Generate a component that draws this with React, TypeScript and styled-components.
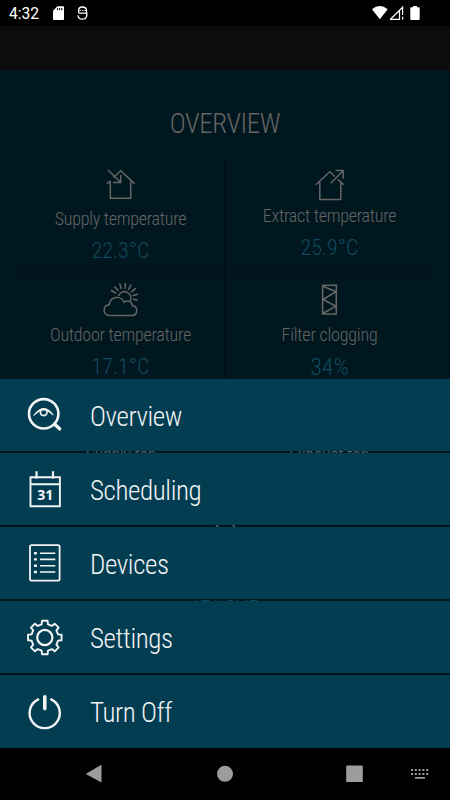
import React from 'react';
import styled, { createGlobalStyle } from 'styled-components';

const GlobalStyle = createGlobalStyle`
  * { box-sizing: border-box; }
  body { margin: 0; background: #000; }
`;

const Screen = styled.div`
  position: relative;
  width: 450px;
  height: 800px;
  overflow: hidden;
  display: flex;
  flex-direction: column;
  background: #000;
  font-family: Roboto, 'Liberation Sans', sans-serif;
`;

const StatusBar = styled.header`
  height: 26px;
  flex: none;
  display: flex;
  align-items: flex-start;
  justify-content: space-between;
  padding: 0 30px 0 9px;
  color: #fff;
`;

const StatusGroup = styled.div`
  display: flex;
  align-items: flex-start;
`;

const Clock = styled.span`
  width: 44px;
  font-size: 15.6px;
  line-height: 28px;
`;

const AppBar = styled.div`
  height: 44px;
  flex: none;
  background: #0c0c0c;
`;

const Page = styled.main`
  height: 678px;
  flex: none;
  overflow: hidden;
  background: #00171f;
  color: #656565;
`;

const Condensed = styled.span<{ $size: number; $tracking?: number }>`
  display: inline-block;
  white-space: nowrap;
  font-family: Roboto, 'Liberation Sans', sans-serif;
  font-weight: 300;
  font-stretch: 75%;
  font-size: ${(p) => p.$size}px;
  letter-spacing: ${(p) => p.$tracking ?? 0}px;
`;

const Title = styled.h1`
  margin: 0;
  height: 90px;
  padding-top: 38px;
  line-height: 32px;
  text-align: center;
  font-size: 16px;
  font-weight: 300;
`;

const Grid = styled.div`
  margin: 0 17px;
  display: grid;
  grid-template-columns: 207px 209px;
  grid-template-rows: 113px 113px;
`;

const Cell = styled.section<{ $right?: boolean; $last?: boolean }>`
  display: flex;
  flex-direction: column;
  align-items: center;
  padding-top: ${(p) => (p.$last ? 7 : 5)}px;
  border-left: ${(p) => (p.$right ? '2px solid #001219' : '0')};
  border-bottom: ${(p) => (p.$last ? '0' : '2px solid #001219')};
`;

const Label = styled.div<{ $gap: number }>`
  margin-top: ${(p) => p.$gap}px;
  height: 22px;
  line-height: 22px;
`;

const Value = styled.div`
  height: 28px;
  margin-top: 7px;
  line-height: 28px;
  color: #11495d;
`;

const FanRow = styled.div`
  display: grid;
  grid-template-columns: 208px 208px;
  justify-items: center;
  margin: 58px 17px 0;
  line-height: 22px;
`;

const Mode = styled.div`
  margin-top: 53px;
  display: flex;
  flex-direction: column;
  align-items: center;
  gap: 36px;
  line-height: 24px;
  color: #11495d;
`;

const Menu = styled.nav`
  position: absolute;
  top: 379px;
  left: 0;
  right: 0;
  display: flex;
  flex-direction: column;
  gap: 2px;
`;

const MenuItem = styled.button`
  height: 72px;
  border: 0;
  margin: 0;
  padding: 0 0 0 20px;
  display: flex;
  align-items: center;
  gap: 22px;
  background: #023d52;
  color: #f2f4f5;
  text-align: left;
  line-height: 32px;
  &:last-child { height: 73px; }
`;

const MenuText = styled.div`
  padding-top: 8px;
`;

const NavBar = styled.footer`
  height: 52px;
  flex: none;
  display: flex;
  background: #000;
`;

const SupplyIcon = () => (
  <svg width="40" height="40" fill="none" stroke="currentColor" strokeWidth="1.5">
    <path d="M6 18.9 9.4 15.7M12.4 12.8 19.7 5.8 33.7 18.9M9.3 16.5V33.3H29.7V16.5M7 5 19.5 17.2M19.7 10V17.4H12" />
  </svg>
);

const ExtractIcon = () => (
  <svg width="40" height="40" fill="none" stroke="currentColor" strokeWidth="1.5">
    <path d="M5.8 19.7 19.8 6.7 24.8 11.5M27.8 14.2 33.8 19.7M9.8 17V34.4H30.8V17.5M20.8 18.3 33 5.8M25.5 5.5H33.2V13.7" />
  </svg>
);

const OutdoorIcon = () => (
  <svg width="40" height="40" fill="none" stroke="currentColor" strokeWidth="1.5" strokeLinecap="round">
    <path d="M8 35.4H31C37 35.4 37.4 26.5 31.4 25.8C31.3 21.7 26.3 19.4 23 22.2C20.7 15.5 9 15.3 8.3 24.8C1.4 25.3 1.5 34.8 8 35.4Z" />
    <path d="M17.6 15.6A6.3 6.3 0 1 1 29.4 20.4" />
    <path d="M14.7 13 10.4 10.5M17 10.4 13.8 6.7M20.2 8.5 18.8 4M24 8.2 24.4 3.5M27.7 9.3 29.8 5.2M30.5 11.8 34.4 8.6M32 15.5 36.6 14.2M32.3 19.2 36.3 20.2" />
  </svg>
);

const FilterIcon = () => (
  <svg width="40" height="40" fill="none" stroke="currentColor" strokeWidth="1.6">
    <path d="M12.6 5.3H26.3V34H12.6ZM13.1 6.3 26 11.7 13.1 19.5 26 26.3 13.1 33.3" />
  </svg>
);

const iconProps = { width: 48, height: 72, fill: 'none', stroke: 'currentColor' } as const;

const OverviewIcon = () => (
  <svg {...iconProps}>
    <circle cx="23.7" cy="34.8" r="14.7" strokeWidth="2.6" />
    <path d="M34.6 45.2 39.6 49.8" strokeWidth="3.5" strokeLinecap="round" />
    <path d="M13.7 36.6Q23.7 22.5 33.3 36.2M14.5 35.5C18 32.5 20 30.8 23.7 30.6C27.4 30.8 29.5 32.5 32.8 35.5" strokeWidth="1.1" />
    <circle cx="23.7" cy="33.3" r="3.3" strokeWidth="1.6" />
  </svg>
);

const CalendarText = styled.text`
  font: 700 14px 'Open Sans', 'Noto Sans', sans-serif;
`;

const SchedulingIcon = () => (
  <svg {...iconProps}>
    <path d="M10.5 24.2H39.9V53.2H10.5ZM10.5 31.2H39.9" strokeWidth="1.9" />
    <path d="M16.5 18.3V25.5M33 18.3V25.5" strokeWidth="2.2" />
    <CalendarText x="25.3" y="46.8" textAnchor="middle" fill="currentColor" stroke="none">31</CalendarText>
  </svg>
);

const DevicesIcon = () => (
  <svg {...iconProps}>
    <rect x="10" y="18.2" width="29.6" height="35.4" rx="1.6" strokeWidth="1.8" />
    <path d="M14 26.2H16.9M14 32.4H16.9M14 38.7H16.9M14 45H16.9" strokeWidth="2.4" />
    <path d="M20 26.2H35.3M20 32.4H35.3M20 38.7H35.3M20 45H35.3" strokeWidth="1.6" />
  </svg>
);

// Outline of an eight-toothed gear centred on (cx, cy).
const gearPath = (cx: number, cy: number, outer: number, root: number) => {
  const points: string[] = [];
  for (let i = 0; i < 8; i++) {
    const steps: [number, number][] = [[-13.5, root], [-9.5, outer], [9.5, outer], [13.5, root]];
    steps.forEach(([offset, r]) => {
      const a = ((i * 45 + offset - 90) * Math.PI) / 180;
      points.push(`${(cx + r * Math.cos(a)).toFixed(2)} ${(cy + r * Math.sin(a)).toFixed(2)}`);
    });
  }
  return `M${points.join('L')}Z`;
};

const SettingsIcon = () => (
  <svg {...iconProps} strokeLinejoin="round">
    <path d={gearPath(24.8, 36.5, 17, 13.6)} strokeWidth="1.9" />
    <circle cx="24.8" cy="36.5" r="7.6" strokeWidth="2.2" />
  </svg>
);

const PowerIcon = () => (
  <svg {...iconProps} strokeLinecap="round">
    <path d="M18.2 23.4A15.1 15.1 0 1 0 31.2 23.4" strokeWidth="2.4" />
    <path d="M24.8 20.8V32.6" strokeWidth="3.6" />
  </svg>
);

const items = [
  { text: 'Overview', Icon: OverviewIcon },
  { text: 'Scheduling', Icon: SchedulingIcon },
  { text: 'Devices', Icon: DevicesIcon },
  { text: 'Settings', Icon: SettingsIcon },
  { text: 'Turn Off', Icon: PowerIcon },
];

export default function App() {
  return (
    <Screen>
      <GlobalStyle />
      <StatusBar>
        <StatusGroup>
          <Clock>4:32</Clock>
          <svg width="40" height="26">
            <path d="M4.5 6.3H10.2Q11 6.3 11 7.1V19Q11 20 10 20H1Q0 20 0 19V10.8Z" fill="#fff" />
            <path d="M4.6 8V10.3M6.7 8V10.3M8.8 8V10.3" stroke="#000" strokeWidth="1" />
            <g fill="none" stroke="#fff" strokeWidth="1.3">
              <path d="M33.5 12.8V10.2Q33.2 7 29.4 7Q25.6 7 25.6 10.2V12Q25.6 13.2 27 13.2H33.8V15.2Q33.5 19.2 29.4 19.2Q25.2 19.2 25 15.2" />
              <path d="M26.3 10.4H33" strokeWidth="1" strokeDasharray="1.6 1" />
            </g>
          </svg>
        </StatusGroup>
        <svg width="48" height="26" fill="#fff">
          <path d="M0 9.3Q7.8 2.8 15.7 9.3L7.8 19.3Z" />
          <path d="M18.5 19.3 30.6 7.3V15M18 19.3H27.5V10.8" fill="none" stroke="#fff" strokeWidth="1.2" />
          <path d="M30 16.8H31.3V19.6H30ZM38.3 8Q38.3 7.3 39 7.3H41V6H45V7.3H46.7Q47.7 7.3 47.7 8.2V19Q47.7 20 46.7 20H39.3Q38.3 20 38.3 19Z" />
        </svg>
      </StatusBar>
      <AppBar />
      <Page>
        <Title><Condensed $size={27} $tracking={-0.4}>OVERVIEW</Condensed></Title>
        <Grid>
          <Cell>
            <SupplyIcon />
            <Label $gap={3}><Condensed $size={18} $tracking={-0.25}>Supply temperature</Condensed></Label>
            <Value><Condensed $size={22}>22.3°C</Condensed></Value>
          </Cell>
          <Cell $right>
            <ExtractIcon />
            <Label $gap={0}><Condensed $size={18} $tracking={-0.25}>Extract temperature</Condensed></Label>
            <Value><Condensed $size={22}>25.9°C</Condensed></Value>
          </Cell>
          <Cell $last>
            <OutdoorIcon />
            <Label $gap={4}><Condensed $size={18} $tracking={-0.25}>Outdoor temperature</Condensed></Label>
            <Value><Condensed $size={22}>17.1°C</Condensed></Value>
          </Cell>
          <Cell $right $last>
            <FilterIcon />
            <Label $gap={4}><Condensed $size={18} $tracking={-0.2}>Filter clogging</Condensed></Label>
            <Value><Condensed $size={24}>34%</Condensed></Value>
          </Cell>
        </Grid>
        <FanRow>
          <Condensed $size={18} $tracking={-0.3}>Supply fan</Condensed>
          <Condensed $size={18} $tracking={-0.2}>Exhaust fan</Condensed>
        </FanRow>
        <Mode>
          <svg width="40" height="40" fill="none" stroke="#656565" strokeWidth="1.3"><circle cx="20.5" cy="14" r="11" /></svg>
          <Condensed $size={18}>AT HOME</Condensed>
        </Mode>
      </Page>
      <Menu>
        {items.map(({ text, Icon }) => (
          <MenuItem key={text}>
            <Icon />
            <MenuText><Condensed $size={27} $tracking={-0.4}>{text}</Condensed></MenuText>
          </MenuItem>
        ))}
      </Menu>
      <NavBar>
        <svg width="450" height="52" fill="#9c9c9c">
          <path d="M86 25.7 101 17Q101.5 17 101.5 17.6V33.8Q101.5 34.4 101 34.3L86.3 26.3Z" />
          <circle cx="225" cy="25.8" r="8" />
          <rect x="346.2" y="17.5" width="16.6" height="16.5" rx="0.6" />
          <path d="M411 22H428.5M411 26H428.5" stroke="#9c9c9c" strokeWidth="2" strokeDasharray="2 1.8" />
          <rect x="415" y="29" width="10" height="1.7" />
        </svg>
      </NavBar>
    </Screen>
  );
}
